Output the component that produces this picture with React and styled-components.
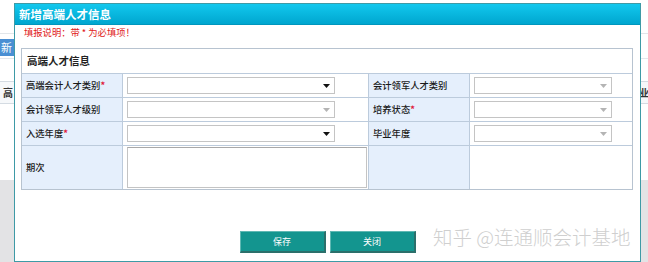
import styled, { createGlobalStyle } from 'styled-components';

const GlobalStyle = createGlobalStyle`
  html, body {
    margin: 0;
    padding: 0;
    background: #fff;
  }
  * {
    box-sizing: border-box;
  }
`;

const rows = [
  {
    left: { label: '高端会计人才类别', required: true, active: true },
    right: { label: '会计领军人才类别', required: false, active: false },
  },
  {
    left: { label: '会计领军人才级别', required: false, active: false },
    right: { label: '培养状态', required: true, active: false },
  },
  {
    left: { label: '入选年度', required: true, active: true },
    right: { label: '毕业年度', required: false, active: false },
  },
];

const Arrow = ({ active }) => (
  <svg width="7" height="4" viewBox="0 0 7 4">
    <path d="M0 0 L7 0 L3.5 4 Z" fill={active ? '#111' : '#b4b4b4'} />
  </svg>
);

const App = () => (
  <Page>
    <GlobalStyle />
    <Backdrop>
      <TopLine />
      <TabBar>
        <Tab>新增</Tab>
      </TabBar>
      <HeadRow>
        <HeadCell>高</HeadCell>
        <HeadCell $right>业</HeadCell>
      </HeadRow>
      <Gap />
      <GreyArea />
    </Backdrop>

    <Dialog>
      <TitleBar>新增高端人才信息</TitleBar>
      <Notice>填报说明：带 * 为必填项！</Notice>
      <Panel>
        <PanelHead>高端人才信息</PanelHead>
        <FormGrid>
          {rows.map(({ left, right }) => [
            <Label key={left.label}>
              {left.label}
              {left.required && <Star>*</Star>}
            </Label>,
            <Field key={left.label + '-f'}>
              <Select $w={208}>
                <Arrow active={left.active} />
              </Select>
            </Field>,
            <Label key={right.label}>
              {right.label}
              {right.required && <Star>*</Star>}
            </Label>,
            <Field key={right.label + '-f'} $last>
              <Select $w={138}>
                <Arrow active={right.active} />
              </Select>
            </Field>,
          ])}
          <Label $tall>期次</Label>
          <Field $tall>
            <TextBox />
          </Field>
          <Label $tall />
          <Field $tall $last />
        </FormGrid>
      </Panel>
      <Footer>
        <Button>保存</Button>
        <Button>关闭</Button>
      </Footer>
      <Watermark>知乎 @连通顺会计基地</Watermark>
    </Dialog>
  </Page>
);

export default App;

const Page = styled.div`
  position: relative;
  width: 648px;
  height: 262px;
  overflow: hidden;
  font-family: "Noto Sans CJK SC", "Noto Sans", sans-serif;
  color: #333;
`;

const Backdrop = styled.div`
  display: flex;
  flex-direction: column;
  height: 100%;
  padding-top: 33px;
`;

const TopLine = styled.div`
  height: 1px;
  background: #e2e6ea;
`;

const TabBar = styled.div`
  display: flex;
  padding-top: 5px;
  height: 25px;
  border-bottom: 1px solid #e4e8ec;
`;

const Tab = styled.div`
  width: 14px;
  height: 17px;
  overflow: hidden;
  white-space: nowrap;
  background: #4a8fd3;
  color: #fff;
  font-size: 11px;
  line-height: 17px;
  padding-left: 1px;
  letter-spacing: 3px;
`;

const HeadRow = styled.div`
  display: flex;
  justify-content: space-between;
  margin-top: 22px;
  height: 23px;
  border-top: 1px solid #d4dbe2;
  border-bottom: 1px solid #d4dbe2;
  background: #f6f8fa;
`;

const HeadCell = styled.div`
  font-size: 10px;
  font-weight: bold;
  line-height: 21px;
  padding-left: ${({ $right }) => ($right ? '0' : '3px')};
  margin-right: ${({ $right }) => ($right ? '-1px' : '0')};
`;

const Gap = styled.div`
  flex: 0 0 76px;
`;

const GreyArea = styled.div`
  flex: 1;
  background: #e3e3e5;
`;

const Dialog = styled.div`
  position: absolute;
  left: 14px;
  top: 3px;
  width: 627px;
  height: 259px;
  border: 1px solid #3e9aa6;
  background: #fff;
  display: flex;
  flex-direction: column;
`;

const TitleBar = styled.div`
  height: 21px;
  background: linear-gradient(#12c8ee, #00a6cf);
  color: #fff;
  font-size: 11.5px;
  font-weight: bold;
  line-height: 21px;
  padding-left: 4px;
  border-bottom: 1px solid #0096bd;
`;

const Notice = styled.div`
  height: 14px;
  color: #e02020;
  font-size: 9.3px;
  line-height: 14px;
  padding-left: 9px;
`;

const Panel = styled.div`
  margin: 9px 7px 0 6px;
  border: 1px solid #b7c3d0;
`;

const PanelHead = styled.div`
  height: 24px;
  font-size: 10.5px;
  font-weight: bold;
  line-height: 24px;
  padding-left: 5px;
  color: #222;
`;

const FormGrid = styled.div`
  display: grid;
  grid-template-columns: 101px 246px 101px 1fr;
  grid-auto-rows: auto;
`;

const Label = styled.div`
  height: ${({ $tall }) => ($tall ? '44px' : '24px')};
  background: #e5effc;
  border-top: 1px solid #bccbdc;
  border-right: 1px solid #bccbdc;
  font-size: 9.3px;
  font-weight: 500;
  line-height: ${({ $tall }) => ($tall ? '42px' : '22px')};
  padding-left: 4px;
  color: #1a1a1a;
`;

const Star = styled.span`
  color: #e0203a;
  font-weight: bold;
`;

const Field = styled.div`
  height: ${({ $tall }) => ($tall ? '44px' : '24px')};
  border-top: 1px solid #bccbdc;
  border-right: ${({ $last }) => ($last ? 'none' : '1px solid #bccbdc')};
  padding: ${({ $tall }) => ($tall ? '1px 0 0 4px' : '3px 0 0 4px')};
  background: #fff;
`;

const Select = styled.div`
  width: ${({ $w }) => $w}px;
  height: 17px;
  border: 1px solid #c4c4c4;
  background: #fff;
  display: flex;
  align-items: center;
  justify-content: flex-end;
  padding-right: 4px;
`;

const TextBox = styled.div`
  width: 240px;
  height: 41px;
  border: 1px solid #c4c4c4;
  border-top-color: #a8a8a8;
  background: #fff;
`;

const Footer = styled.div`
  display: flex;
  justify-content: center;
  gap: 4px;
  margin-top: 41px;
`;

const Button = styled.div`
  width: 86px;
  height: 22px;
  background: #13958f;
  border-top: 1px solid #5fb8b3;
  border-left: 1px solid #5fb8b3;
  border-right: 2px solid #2b6f6b;
  border-bottom: 2px solid #2b6f6b;
  color: #fff;
  font-size: 9px;
  line-height: 19px;
  text-align: center;
`;

const Watermark = styled.div`
  position: absolute;
  left: 418px;
  top: 218px;
  font-size: 19.5px;
  font-weight: 300;
  color: #cfcfcf;
  white-space: nowrap;
`;
